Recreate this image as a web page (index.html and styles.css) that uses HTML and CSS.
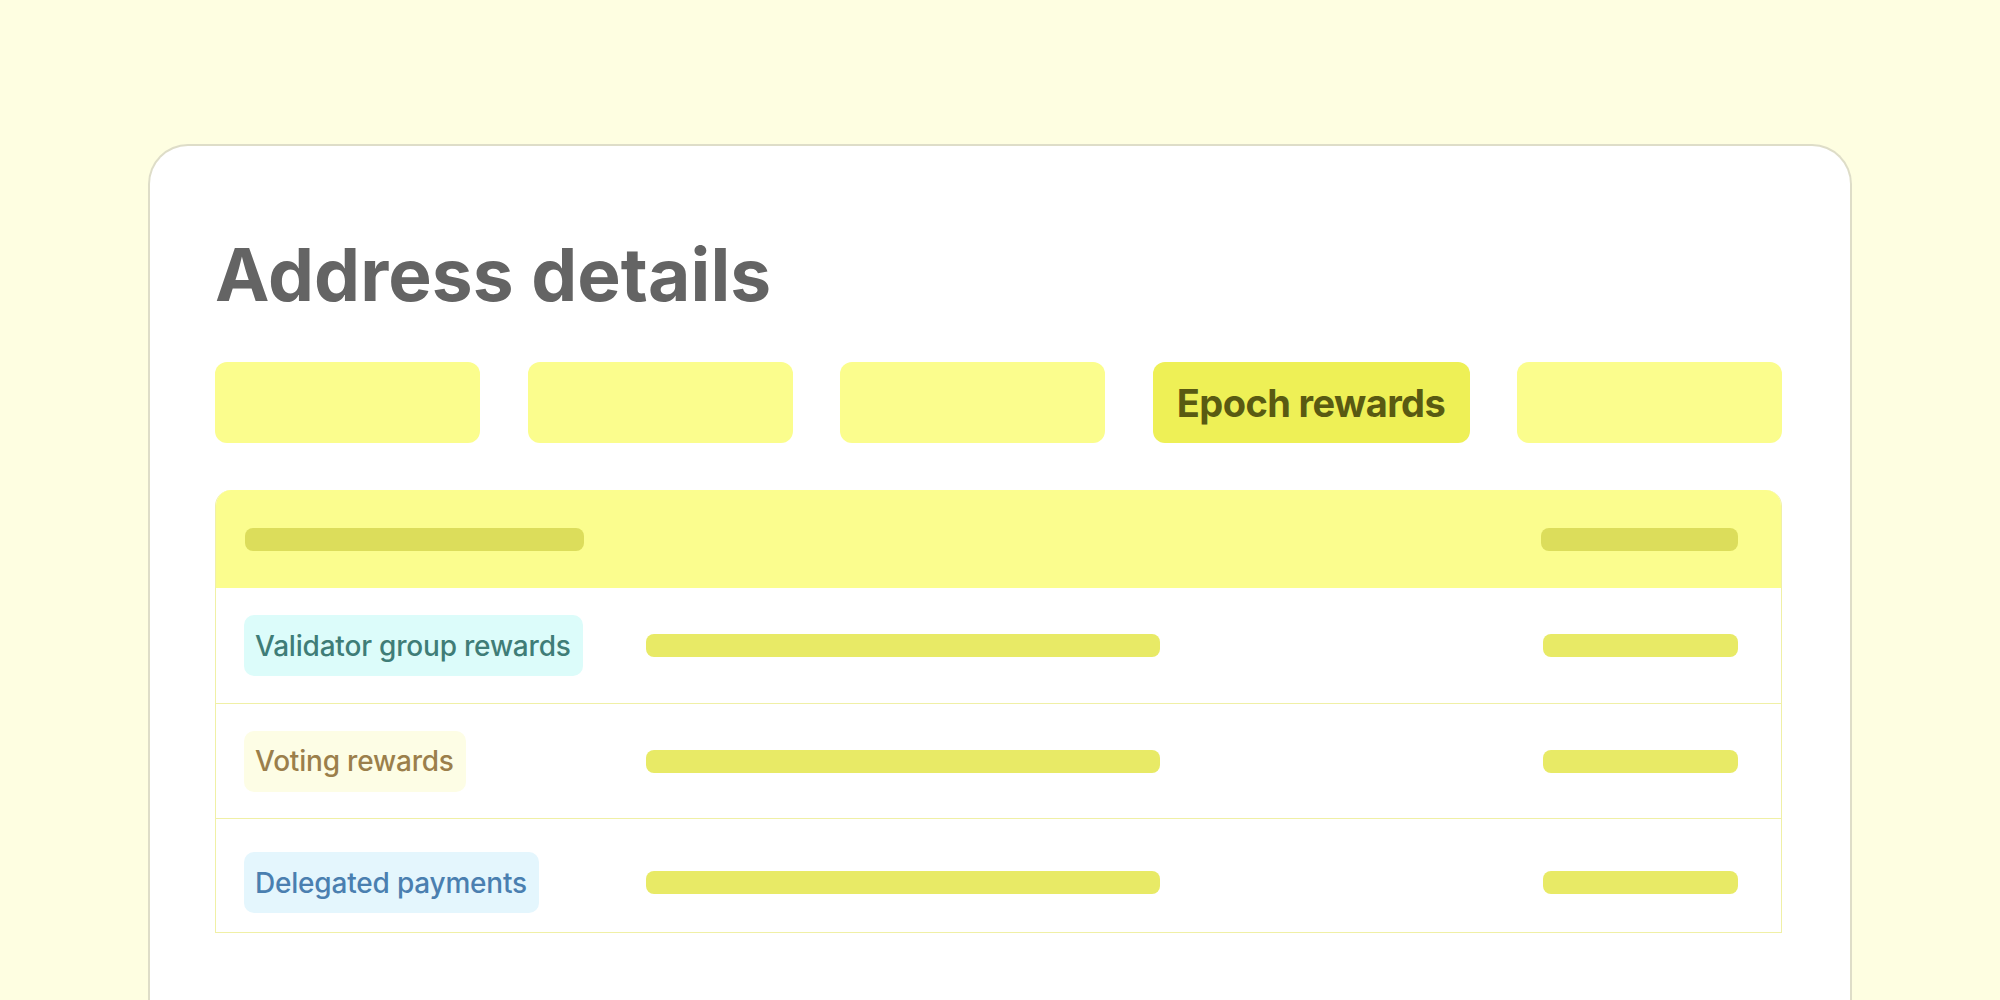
FILE: index.html
```html
<!DOCTYPE html>
<html lang="en">
<head>
<meta charset="utf-8">
<title>Address details</title>
<link rel="stylesheet" href="styles.css">
</head>
<body>
<div class="page">
  <div class="card">
    <h1 class="title">Address details</h1>
    <div class="tabs">
      <div class="tab"></div>
      <div class="tab"></div>
      <div class="tab"></div>
      <div class="tab tab-active">Epoch rewards</div>
      <div class="tab"></div>
    </div>
    <div class="table">
      <div class="thead">
        <span class="bar bar-head bar-head-wide"></span>
        <span class="spacer"></span>
        <span class="bar bar-head bar-head-narrow"></span>
      </div>
      <div class="row">
        <div class="cell"><span class="pill pill-teal">Validator group rewards</span></div>
        <span class="bar bar-mid"></span>
        <span class="spacer"></span>
        <span class="bar bar-end"></span>
      </div>
      <div class="row">
        <div class="cell"><span class="pill pill-sand">Voting rewards</span></div>
        <span class="bar bar-mid"></span>
        <span class="spacer"></span>
        <span class="bar bar-end"></span>
      </div>
      <div class="row row-last">
        <div class="cell"><span class="pill pill-blue">Delegated payments</span></div>
        <span class="bar bar-mid"></span>
        <span class="spacer"></span>
        <span class="bar bar-end"></span>
      </div>
    </div>
  </div>
</div>
</body>
</html>
```
FILE: styles.css
```css
* { box-sizing: border-box; }
html, body { margin: 0; padding: 0; }
body {
  background: #fefee1;
  width: 2000px;
  height: 1000px;
  overflow: hidden;
  font-family: "Inter", "Noto Sans", sans-serif;
}
.page {
  padding: 144px 148px 0 148px;
}
.card {
  background: #ffffff;
  border: 2px solid #deddc8;
  border-bottom: none;
  border-radius: 40px 40px 0 0;
  height: 900px;
  padding: 92px 68px 0 65px;
}
.title {
  margin: 0;
  font-family: "Inter", "Noto Sans", sans-serif;
  font-weight: 700;
  font-size: 73px;
  line-height: 1;
  color: #646464;
  letter-spacing: 0.1px;
}
.tabs {
  margin-top: 51px;
  display: flex;
  justify-content: space-between;
}
.tab {
  width: 265px;
  height: 81px;
  border-radius: 12px;
  background: #fbfd8d;
}
.tab-active {
  width: 317px;
  background: #eef056;
  color: #595a12;
  font-weight: 700;
  font-size: 38px;
  letter-spacing: -0.6px;
  display: flex;
  align-items: center;
  justify-content: center;
}
.table {
  margin-top: 47px;
  border: 1px solid #f0f0a6;
  border-top: none;
  border-radius: 16px 16px 0 0;
  overflow: hidden;
}
.thead {
  height: 98px;
  background: #fbfd8e;
  display: flex;
  align-items: center;
  padding: 0 43px 0 29px;
}
.spacer { flex: 1; }
.bar {
  display: block;
  height: 23px;
  border-radius: 8px;
}
.bar-head { background: #dcdd5b; }
.bar-head-wide { width: 339px; }
.bar-head-narrow { width: 197px; }
.row {
  height: 115px;
  display: flex;
  align-items: center;
  padding: 0 43px 0 28px;
}
.row:first-of-type { height: 114px; }
.row + .row { border-top: 1px solid #f0f0a6; }
.row-last { padding-top: 14px; height: 114px; }
.cell { width: 402px; }
.bar-mid { width: 514px; background: #e8ea66; }
.bar-end { width: 195px; background: #e8ea66; }
.pill {
  display: inline-flex;
  align-items: center;
  height: 61px;
  padding: 0 12px 0 11px;
  border-radius: 10px;
  font-weight: 500;
  font-size: 28px;
  letter-spacing: -0.2px;
}
.pill-teal { background: #dcfcfa; color: #3f7d77; }
.pill-sand { background: #fdfde5; color: #9b7f4b; }
.pill-blue { background: #e4f6fd; color: #4a7fb0; }
```
